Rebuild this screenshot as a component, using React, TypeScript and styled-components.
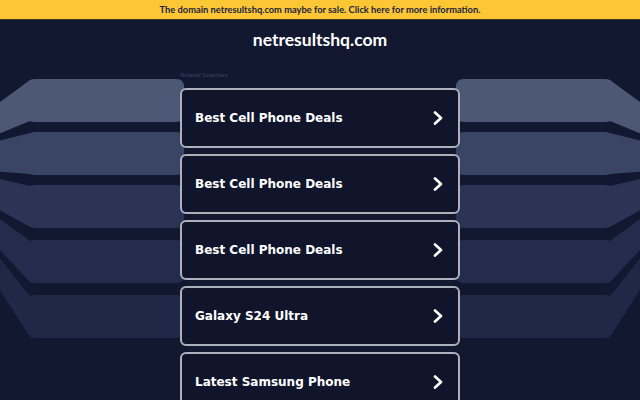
import React from "react";
import styled, { createGlobalStyle } from "styled-components";

const GlobalStyle = createGlobalStyle`
    html, body {
        margin: 0;
        padding: 0;
        background: #121830;
    }
`

const PageDiv = styled.div`
    position: relative;
    width: 640px;
    height: 400px;
    overflow: hidden;
    background: #121830;
    display: flex;
    flex-direction: column;
    align-items: center;

    & > * {
        flex-shrink: 0;
    }
`

const Backdrop = styled.svg`
    position: absolute;
    left: 0;
    top: 0;
    width: 640px;
    height: 400px;
`

const Banner = styled.a`
    position: relative;
    box-sizing: border-box;
    width: 100%;
    height: 20px;
    background: #fcc634;
    border-bottom: 1px solid #3b3a2c;
    display: flex;
    align-items: center;
    justify-content: center;
    font: 700 9.3px "Lato", "Noto Sans", sans-serif;
    color: #1b2340;
    text-decoration: none;
`

const Title = styled.h1`
    position: relative;
    margin: 9px 0 0;
    font: 700 17.5px "Lato", "Noto Sans", sans-serif;
    color: #ffffff;
    line-height: 22px;
`

const Results = styled.div`
    position: relative;
    width: 280px;
    margin-top: 20px;
    display: flex;
    flex-direction: column;
    gap: 6px;

    & > * {
        flex-shrink: 0;
    }
`

const Label = styled.p`
    margin: 0 0 3px;
    font: 400 6px "Liberation Sans", sans-serif;
    color: #3c4460;
    line-height: 8px;
`

const Card = styled.a`
    box-sizing: border-box;
    height: 60px;
    padding: 0 14px 0 13px;
    border: 2px solid #aeb1bb;
    border-radius: 6px;
    background: #10152c;
    display: flex;
    align-items: center;
    justify-content: space-between;
    font: 700 12px "DejaVu Sans", sans-serif;
    color: #ffffff;
    text-decoration: none;
`

const bands = [
    { top: 79, bottom: 122, color: "#4d5877" },
    { top: 132, bottom: 175, color: "#3a4465" },
    { top: 185, bottom: 228, color: "#2b3455" },
    { top: 240, bottom: 283, color: "#232c4c" },
    { top: 295, bottom: 338, color: "#1f2847" },
]

const outer = (y: number) => 102 + 0.726 * (y - 79)

function bandPath(t: number, b: number) {
    return `M0,${outer(t)} L30,${t + 1} Q32,${t} 35,${t} L176,${t} Q184,${t} 184,${t + 8} L184,${b - 8} Q184,${b} 176,${b} L35,${b} Q32,${b} 30,${b - 1} L0,${outer(b)} Z`
}

const items = [
    "Best Cell Phone Deals",
    "Best Cell Phone Deals",
    "Best Cell Phone Deals",
    "Galaxy S24 Ultra",
    "Latest Samsung Phone",
]

function Chevron() {
    return (
        <svg width="12" height="14" viewBox="0 0 12 14">
            <polyline points="3,1.5 9,7 3,12.5" fill="none" stroke="#ffffff" strokeWidth="2.6" strokeLinecap="round" strokeLinejoin="round"/>
        </svg>
    )
}

export default function App() {
    return (
        <PageDiv>
            <GlobalStyle/>
            <Backdrop viewBox="0 0 640 400">
                {bands.map((b, i) => (
                    <g key={i} fill={b.color}>
                        <path d={bandPath(b.top, b.bottom)}/>
                        <path d={bandPath(b.top, b.bottom)} transform="translate(640,0) scale(-1,1)"/>
                    </g>
                ))}
            </Backdrop>
            <Banner href="#">The domain netresultshq.com maybe for sale. Click here for more information.</Banner>
            <Title>netresultshq.com</Title>
            <Results>
                <Label>Related Searches</Label>
                {items.map((text, i) => (
                    <Card href="#" key={i}>
                        {text}
                        <Chevron/>
                    </Card>
                ))}
            </Results>
        </PageDiv>
    )
}
